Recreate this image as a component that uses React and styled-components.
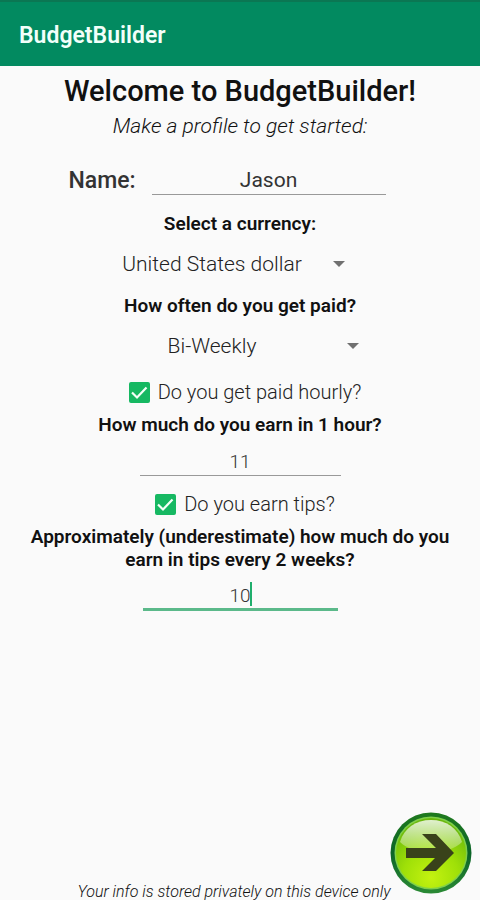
import { useState } from "react";
import styled, { createGlobalStyle } from "styled-components";

const GlobalStyle = createGlobalStyle`
  * {
    box-sizing: border-box;
  }

  body {
    margin: 0;
    background-color: #fafafa;
    color: #111;
    font-family: Roboto, sans-serif;
  }
`;

const Page = styled.div`
  display: flex;
  flex-direction: column;
  min-height: 100vh;
`;

const AppBar = styled.header`
  display: flex;
  align-items: center;
  height: 66px;
  padding: 2px 19px 0;
  background-color: #028a60;
  border-top: 2px solid #0b7753;
  color: #f2fffa;
  font-size: 23px;
  font-weight: 600;
`;

const Form = styled.form`
  display: flex;
  flex: 1;
  flex-direction: column;
  align-items: center;
  padding: 6px 20px 0;
`;

const Title = styled.h1`
  margin: 0;
  font-size: 29px;
  line-height: 38px;
  font-weight: 500;
`;

const Subtitle = styled.p`
  margin: 0 0 24px;
  font-size: 21px;
  line-height: 32px;
  font-style: italic;
  font-weight: 300;
`;

const NameRow = styled.div`
  display: flex;
  align-items: center;
  gap: 16px;
  margin: 0 26px 0 0;
`;

const NameLabel = styled.label`
  color: #333;
  font-size: 23px;
  font-weight: 500;
`;

const Prompt = styled.label`
  display: block;
  margin-top: ${({ $gap }) => $gap}px;
  font-size: 19px;
  line-height: 23px;
  font-weight: 600;
  text-align: center;
`;

const Field = styled.div`
  position: relative;
  margin-top: ${({ $gap }) => $gap || 0}px;
`;

const TextInput = styled.input`
  display: block;
  width: ${({ $width }) => $width}px;
  height: 29px;
  padding: 0;
  border: none;
  border-bottom: 1px solid #999;
  border-radius: 0;
  background: none;
  color: #333;
  font-family: inherit;
  font-size: ${({ $size }) => $size || 19}px;
  font-weight: ${({ $size }) => ($size ? 400 : 300)};
  text-align: center;
  outline: none;
`;

const ActiveInput = styled(TextInput)`
  border-bottom: 3px solid #5bb98a;
  caret-color: transparent;
`;

const Caret = styled.span`
  position: absolute;
  top: 0;
  left: calc(50% + 10px);
  width: 2px;
  height: 24px;
  background-color: #1fae6c;
`;

const Select = styled.select`
  width: ${({ $width }) => $width}px;
  height: 40px;
  padding: 0 56px 0 0;
  border: none;
  appearance: none;
  background: none;
  color: #222;
  font-family: inherit;
  font-size: 21px;
  font-weight: 300;
  text-align: center;
  text-align-last: center;
`;

const Arrow = styled.svg`
  position: absolute;
  top: 17px;
  right: 15px;
  width: 12px;
  height: 6px;
  fill: #707070;
  pointer-events: none;
`;

const CheckLabel = styled.label`
  display: flex;
  align-items: center;
  gap: 8px;
  margin-top: ${({ $gap }) => $gap}px;
  padding-left: 10px;
  height: 24px;
  color: #222;
  font-size: 20px;
  font-weight: 300;
`;

const Checkbox = styled.input`
  width: 21px;
  height: 21px;
  margin: 0;
  appearance: none;
  border: 2px solid #777;
  border-radius: 2px;

  &:checked {
    border-color: #16b862;
    background: #16b862;
  }
`;

const CheckBox = styled.span`
  position: relative;
  display: flex;
`;

const Tick = styled.svg`
  position: absolute;
  inset: 0;
  width: 21px;
  height: 21px;
  fill: none;
  stroke: #f4fff8;
  stroke-width: 2.2;
  pointer-events: none;
`;

const Footer = styled.footer`
  padding-right: 12px;
  font-size: 16px;
  line-height: 16px;
  font-style: italic;
  font-weight: 300;
  text-align: center;
`;

const NextButton = styled.button`
  position: fixed;
  right: 8px;
  bottom: 6px;
  width: 82px;
  height: 82px;
  padding: 0;
  border: none;
  border-radius: 50%;
  background: none;

  svg {
    display: block;
  }
`;

function Dropdown({ id, width, options }) {
  return (
    <Field $gap={9}>
      <Select id={id} $width={width}>
        {options.map((option) => (
          <option key={option}>{option}</option>
        ))}
      </Select>
      <Arrow viewBox="0 0 12 6">
        <path d="M0 0h12L6 6z" />
      </Arrow>
    </Field>
  );
}

function Check({ gap, children }) {
  const [checked, setChecked] = useState(true);

  return (
    <CheckLabel $gap={gap}>
      <CheckBox>
        <Checkbox
          type="checkbox"
          checked={checked}
          onChange={(e) => setChecked(e.target.checked)}
        />
        {checked && (
          <Tick viewBox="0 0 21 21">
            <path d="M3 10.5l5 5 9.5-10" />
          </Tick>
        )}
      </CheckBox>
      {children}
    </CheckLabel>
  );
}

function NextIcon() {
  return (
    <svg width="82" height="82" viewBox="0 0 82 82">
      <defs>
        <linearGradient id="ring" x1="0" y1="0" x2="0" y2="1">
          <stop offset="0" stopColor="#1f7a1e" />
          <stop offset="0.5" stopColor="#0b6428" />
          <stop offset="1" stopColor="#2b8a35" />
        </linearGradient>
        <radialGradient id="glow" cx="0.5" cy="0.85" r="0.8">
          <stop offset="0" stopColor="#c4f210" />
          <stop offset="0.5" stopColor="#9fe008" />
          <stop offset="1" stopColor="#6ab80c" />
        </radialGradient>
        <linearGradient id="gloss" x1="0" y1="0" x2="0" y2="1">
          <stop offset="0" stopColor="#fff" stopOpacity="0.8" />
          <stop offset="1" stopColor="#fff" stopOpacity="0.2" />
        </linearGradient>
      </defs>
      <circle cx="41" cy="41" r="40.5" fill="url(#ring)" />
      <circle cx="41" cy="41" r="36.5" fill="#7fd04a" />
      <circle cx="41" cy="41" r="35" fill="url(#glow)" />
      <path
        d="M10 30C14 16 26 8 41 8s27 8 31 22c-7 7-18 10-31 10S17 37 10 30z"
        fill="url(#gloss)"
      />
      <path
        d="M16 36h30L32 22h14l18 19-18 18H32l13-13H16z"
        fill="#39421a"
      />
    </svg>
  );
}

export default function App() {
  return (
    <Page>
      <GlobalStyle />
      <AppBar>BudgetBuilder</AppBar>
      <Form onSubmit={(e) => e.preventDefault()}>
        <Title>Welcome to BudgetBuilder!</Title>
        <Subtitle>Make a profile to get started:</Subtitle>
        <NameRow>
          <NameLabel htmlFor="name">Name:</NameLabel>
          <TextInput id="name" $width={234} $size={21} defaultValue="Jason" />
        </NameRow>
        <Prompt htmlFor="currency" $gap={17}>
          Select a currency:
        </Prompt>
        <Dropdown
          id="currency"
          width={240}
          options={["United States dollar", "Euro", "Pound sterling"]}
        />
        <Prompt htmlFor="frequency" $gap={10}>
          How often do you get paid?
        </Prompt>
        <Dropdown
          id="frequency"
          width={268}
          options={["Bi-Weekly", "Weekly", "Monthly"]}
        />
        <Check gap={14}>Do you get paid hourly?</Check>
        <Prompt htmlFor="wage" $gap={9}>
          How much do you earn in 1 hour?
        </Prompt>
        <Field $gap={11}>
          <TextInput
            id="wage"
            inputMode="decimal"
            $width={201}
            defaultValue="11"
          />
        </Field>
        <Check gap={16}>Do you earn tips?</Check>
        <Prompt htmlFor="tips" $gap={9}>
          Approximately (underestimate) how much do you earn in tips every 2
          weeks?
        </Prompt>
        <Field $gap={11}>
          <ActiveInput
            id="tips"
            inputMode="decimal"
            $width={195}
            defaultValue="10"
          />
          <Caret />
        </Field>
        <NextButton type="submit" aria-label="Next">
          <NextIcon />
        </NextButton>
      </Form>
      <Footer>Your info is stored privately on this device only</Footer>
    </Page>
  );
}
